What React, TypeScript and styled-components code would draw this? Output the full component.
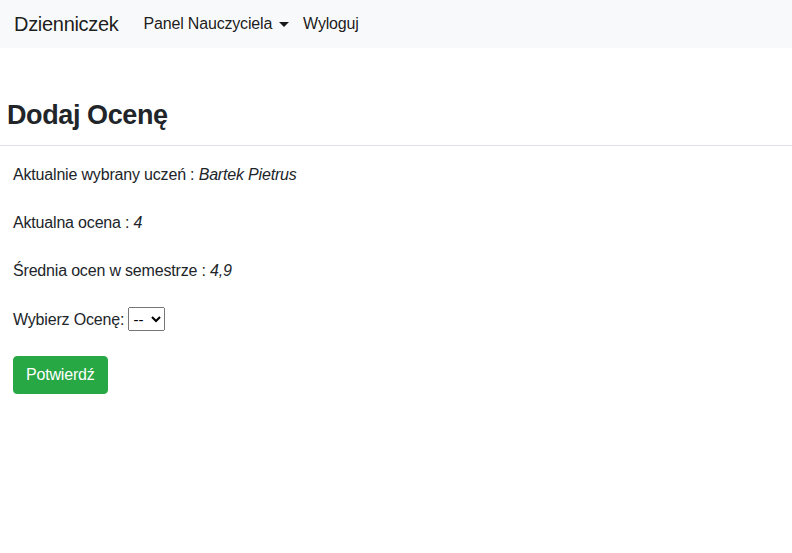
import { createGlobalStyle } from "styled-components";
import styled from "styled-components";

const GlobalStyle = createGlobalStyle`
    html, body {
        margin: 0;
        padding: 0;
        background: #fff;
        font-family: "Liberation Sans", Arial, sans-serif;
        font-size: 16px;
        letter-spacing: -0.18px;
        color: #212529;
    }
    * { box-sizing: border-box; }
`;

const StyledNavbar = styled.nav`
    height: 48px;
    background-color: #f8f9fa;
    display: flex;
    align-items: center;
    padding: 0 14px;
`;

const StyledBrand = styled.a`
    font-size: 20px;
    letter-spacing: -0.3px;
    color: rgba(0, 0, 0, 0.9);
    margin-right: 25px;
    text-decoration: none;
`;

const StyledNavLink = styled.a<{ $caret?: boolean }>`
    font-size: 16px;
    color: rgba(0, 0, 0, 0.9);
    text-decoration: none;
    margin-right: 14px;
    display: flex;
    align-items: center;
    &::after {
        content: "";
        display: ${(p) => (p.$caret ? "inline-block" : "none")};
        margin-left: 7px;
        border-top: 5px solid;
        border-left: 5px solid transparent;
        border-right: 5px solid transparent;
    }
`;

const StyledHeader = styled.div`
    padding: 49px 7px 0;
    border-bottom: 1px solid #dee2e6;
    height: 98px;
    & > h3 {
        margin: 0;
        font-size: 27px;
        letter-spacing: -0.4px;
        font-weight: 700;
        line-height: 36px;
    }
`;

const StyledForm = styled.div`
    padding: 17px 13px;
    display: flex;
    flex-direction: column;
    gap: 24px;
    & > p {
        margin: 0;
        line-height: 24px;
    }
    & > p > em {
        font-style: italic;
    }
`;

const StyledSelect = styled.select`
    font-family: "Liberation Sans", Arial, sans-serif;
    font-size: 15px;
    height: 24px;
    width: 37px;
`;

const StyledButton = styled.button`
    align-self: flex-start;
    background-color: #28a745;
    color: #fff;
    border: 1px solid #28a745;
    border-radius: 4px;
    font-family: inherit;
    font-size: 16px;
    letter-spacing: -0.18px;
    height: 38px;
    padding: 0 12px;
`;

export default function App() {
    return (
        <>
            <GlobalStyle />
            <StyledNavbar>
                <StyledBrand>Dzienniczek</StyledBrand>
                <StyledNavLink $caret>Panel Nauczyciela</StyledNavLink>
                <StyledNavLink>Wyloguj</StyledNavLink>
            </StyledNavbar>
            <StyledHeader>
                <h3>Dodaj Ocenę</h3>
            </StyledHeader>
            <StyledForm>
                <p>
                    Aktualnie wybrany uczeń : <em>Bartek Pietrus</em>
                </p>
                <p>
                    Aktualna ocena : <em>4</em>
                </p>
                <p>
                    Średnia ocen w semestrze : <em>4,9</em>
                </p>
                <p>
                    Wybierz Ocenę:{" "}
                    <StyledSelect defaultValue="--">
                        <option>--</option>
                        <option>1</option>
                        <option>2</option>
                        <option>3</option>
                        <option>4</option>
                        <option>5</option>
                        <option>6</option>
                    </StyledSelect>
                </p>
                <StyledButton>Potwierdź</StyledButton>
            </StyledForm>
        </>
    );
}
